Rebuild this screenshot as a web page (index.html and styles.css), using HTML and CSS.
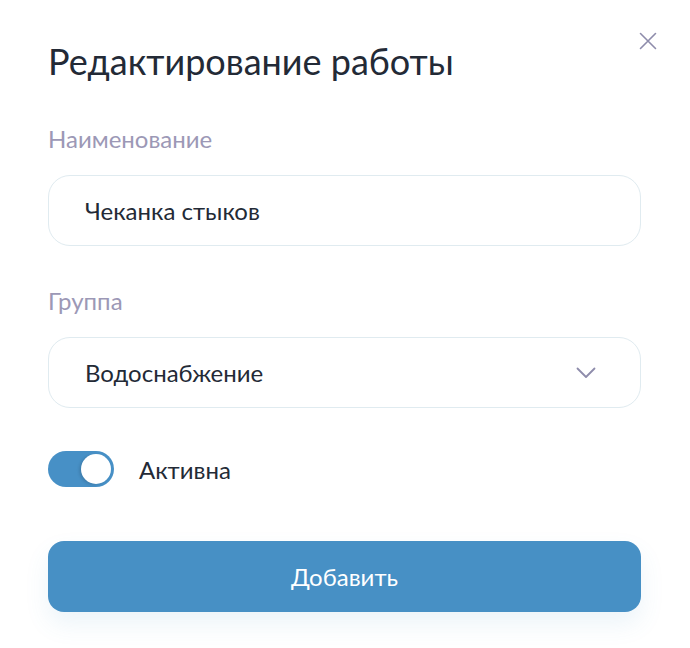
FILE: index.html
```html
<!DOCTYPE html>
<html lang="ru">
<head>
<meta charset="utf-8">
<link rel="stylesheet" href="styles.css">
</head>
<body>
<div class="modal">
  <button class="close" aria-label="Закрыть">
    <svg width="18" height="18" viewBox="0 0 18 18"><path d="M1.5 1.5 L16.5 16.5 M16.5 1.5 L1.5 16.5" stroke="#8e8cab" stroke-width="1.6" stroke-linecap="round" fill="none"/></svg>
  </button>
  <h1 class="title">Редактирование работы</h1>
  <div class="field">
    <label class="label">Наименование</label>
    <div class="input">Чеканка стыков</div>
  </div>
  <div class="field field-group">
    <label class="label">Группа</label>
    <div class="input select">
      <span>Водоснабжение</span>
      <svg class="chevron" width="20" height="12" viewBox="0 0 20 12"><path d="M1.5 1.5 L10 10 L18.5 1.5" stroke="#8e8cab" stroke-width="1.8" stroke-linecap="round" stroke-linejoin="round" fill="none"/></svg>
    </div>
  </div>
  <div class="toggle-row">
    <div class="toggle"><div class="knob"></div></div>
    <span class="toggle-label">Активна</span>
  </div>
  <button class="submit">Добавить</button>
</div>
</body>
</html>
```
FILE: styles.css
```css
* { box-sizing: border-box; }
html, body { margin: 0; padding: 0; background: #ffffff; }
body { font-family: Lato, "Open Sans", sans-serif; color: #232a36; }
.modal {
  position: relative;
  width: 690px;
  height: 648px;
  padding: 40px 49px 0 48px;
  display: flex;
  flex-direction: column;
}
.close {
  position: absolute;
  top: 32px;
  right: 33px;
  width: 18px;
  height: 18px;
  padding: 0;
  border: 0;
  background: none;
  display: flex;
}
.title {
  margin: 0;
  font-size: 36px;
  font-weight: 400;
  line-height: 43px;
  color: #232a36;
}
.field { display: flex; flex-direction: column; margin-top: 41px; }
.field-group { margin-top: 40px; }
.label {
  font-size: 24px;
  line-height: 29px;
  color: #9c98b6;
}
.input {
  margin-top: 22px;
  height: 71px;
  border: 1.5px solid #e0ebf0;
  border-radius: 22px;
  padding: 0 36px;
  display: flex;
  align-items: center;
  font-size: 24px;
  line-height: 29px;
  color: #232a36;
}
.select { justify-content: space-between; padding-right: 44px; }
.chevron { display: block; }
.toggle-row {
  margin-top: 43px;
  display: flex;
  align-items: center;
  gap: 25px;
}
.toggle {
  width: 66px;
  height: 36px;
  border-radius: 18px;
  background: #4790c6;
  display: flex;
  justify-content: flex-end;
  align-items: center;
  padding: 3px;
}
.knob {
  width: 30px;
  height: 30px;
  border-radius: 50%;
  background: #ffffff;
  box-shadow: -2px 1px 3px rgba(0,0,0,0.12);
}
.toggle-label { font-size: 24px; line-height: 29px; color: #232a36; }
.submit {
  margin-top: 54px;
  height: 71px;
  border: 0;
  border-radius: 16px;
  background: #4790c5;
  color: #ffffff;
  font-family: Lato, "Open Sans", sans-serif;
  font-size: 24px;
  box-shadow: 0 12px 24px rgba(71, 144, 198, 0.10);
}
```
